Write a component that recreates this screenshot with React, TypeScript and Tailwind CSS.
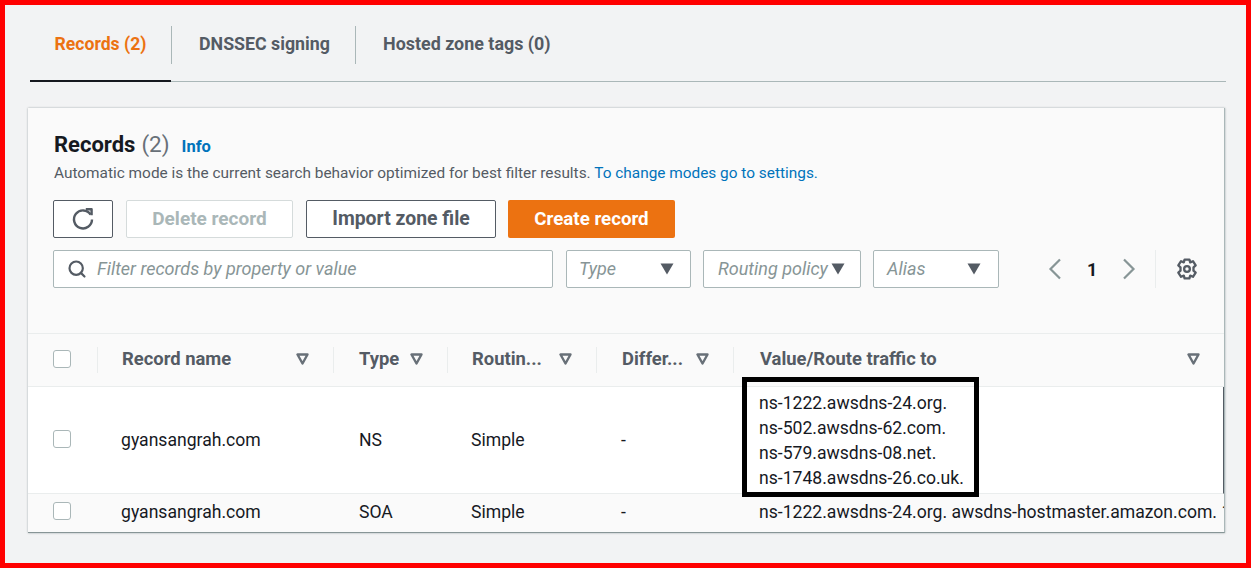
import React from 'react';
import { Search } from 'lucide-react';

const FONT = "font-['Roboto',sans-serif]";
const COLS = 'grid-cols-[69px_236px_114px_149px_137px_1fr]';

const Caret: React.FC = () => (
  <svg width="14" height="12" viewBox="0 0 14 12" className="shrink-0">
    <path d="M0.5 0.5H13.5L7 11.5Z" fill="#545b64" />
  </svg>
);

const SortIcon: React.FC = () => (
  <svg width="13" height="12" viewBox="0 0 13 12" className="shrink-0">
    <path d="M1.5 1.5H11.5L6.5 10.5Z" fill="none" stroke="#687078" strokeWidth="2.4" strokeLinejoin="round" />
  </svg>
);

const RefreshIcon: React.FC = () => (
  <svg width="24" height="24" viewBox="0 0 24 24" fill="none" stroke="#545b64" strokeWidth="2.4">
    <path d="M19.6 7.6A9 9 0 1 0 21 12.5" />
    <path d="M14.8 2.2H20.6V8.2" strokeLinejoin="round" />
  </svg>
);

const GearIcon: React.FC = () => (
  <svg width="22" height="22" viewBox="0 0 20 20" fill="none" stroke="#545b64" strokeWidth="2.1" strokeLinejoin="round">
    <path d="M7.8 1.5H12.2L12.9 4L15.4 2.9L17.9 6.7L15.9 8.5V11.5L17.9 13.3L15.4 17.1L12.9 16L12.2 18.5H7.8L7.1 16L4.6 17.1L2.1 13.3L4.1 11.5V8.5L2.1 6.7L4.6 2.9L7.1 4Z" />
    <circle cx="10" cy="10" r="2.6" />
  </svg>
);

const Chevron: React.FC<{ flip?: boolean }> = ({ flip }) => (
  <svg width="26" height="24" viewBox="0 0 26 24" fill="none" stroke="#879596" strokeWidth="2.2" className={flip ? 'rotate-180' : ''}>
    <path d="M18 2.5L8.5 12L18 21.5" />
  </svg>
);

const Checkbox: React.FC = () => (
  <span className="block w-[18px] h-[18px] rounded-[3px] border border-[#aab7b8] bg-white" />
);

const FilterSelect: React.FC<{ label: string; width: string; pad: string }> = ({ label, width, pad }) => (
  <div className={`${width} ${pad} h-[38px] flex items-center justify-between border border-[#aab7b8] rounded-[2px] bg-white`}>
    <span className="italic text-[18px] text-[#879596] whitespace-nowrap pb-[2px]">{label}</span>
    <Caret />
  </div>
);

const HeaderCell: React.FC<{ label: string; pad: string }> = ({ label, pad }) => (
  <div className={`relative flex items-center justify-between ${pad} pr-[24px] pb-[2px] h-full`}>
    <span className="absolute left-0 top-[13px] bottom-[13px] w-px bg-[#eaeded]" />
    <span className="font-bold text-[18.4px] text-[#545b64] whitespace-nowrap">{label}</span>
    <SortIcon />
  </div>
);

const App: React.FC = () => {
  return (
    <div className={`${FONT} w-[1251px] h-[568px] border-[5px] border-[#ff0000] bg-[#f2f3f4] overflow-hidden`}>
      {/* Tabs */}
      <div className="ml-[25px] mr-[20px] h-[77px] flex items-center border-b border-[#aab7b8] relative">
        <div className="w-[141px] h-[77px] pt-[4px] flex items-center justify-center border-b-2 border-[#16191f] -mb-px">
          <span className="font-bold text-[17.6px] text-[#ec7211]">Records (2)</span>
        </div>
        <div className="w-[185px] h-[38px] mt-[4px] pb-[2px] pl-[2px] flex items-center justify-center border-l border-r border-[#aab7b8]">
          <span className="font-bold text-[17.8px] text-[#545b64]">DNSSEC signing</span>
        </div>
        <div className="pl-[27px] pt-[2px]">
          <span className="font-bold text-[17.9px] text-[#545b64]">Hosted zone tags (0)</span>
        </div>
      </div>

      {/* Records card */}
      <div className="relative ml-[23px] mt-[26px] w-[1197px] h-[425px] bg-[#fafafa] border-r border-b border-r-[#aab7b8] border-b-[#879596] shadow-[0_0_2px_rgba(0,28,36,0.35)]">
        <div className="pl-[25px] pr-[26px] pt-[20px] h-[225px]">
          <div className="flex items-baseline h-[28px] pl-[1px]">
            <h2 className="text-[22px] font-bold text-[#16191f]">Records</h2>
            <span className="text-[22.5px] text-[#687078] ml-[6px]">(2)</span>
            <span className="text-[16.5px] font-bold text-[#0073bb] ml-[12px]">Info</span>
          </div>
          <p className="mt-[7px] pl-[1px] text-[15.4px] leading-[20px] text-[#545b64] whitespace-nowrap">
            Automatic mode is the current search behavior optimized for best filter results.{' '}
            <span className="text-[#0073bb]">To change modes go to settings.</span>
          </p>
          <div className="flex mt-[17px] h-[38px]">
            <button className="w-[60px] flex items-center justify-center border border-[#545b64] rounded-[2px] bg-white">
              <RefreshIcon />
            </button>
            <button className="w-[167px] ml-[13px] border border-[#d5dbdb] rounded-[2px] bg-white font-bold text-[19px] text-[#aab7b8]">Delete record</button>
            <button className="w-[190px] ml-[13px] border border-[#545b64] rounded-[2px] bg-white font-bold text-[19.4px] text-[#545b64]">Import zone file</button>
            <button className="w-[167px] ml-[12px] rounded-[2px] bg-[#ec7211] font-bold text-[18.7px] text-white">Create record</button>
          </div>
          <div className="flex items-center mt-[12px]">
            <div className="w-[500px] h-[38px] flex items-center border border-[#aab7b8] rounded-[2px] bg-white pl-[13px] gap-[10px]">
              <Search size={20} color="#545b64" strokeWidth={2.6} />
              <span className="italic text-[18px] text-[#879596] pb-[2px]">Filter records by property or value</span>
            </div>
            <div className="flex ml-[13px] gap-[12px]">
              <FilterSelect label="Type" width="w-[125px]" pad="pl-[12px] pr-[16px]" />
              <FilterSelect label="Routing policy" width="w-[158px]" pad="pl-[14px] pr-[15px]" />
              <FilterSelect label="Alias" width="w-[126px]" pad="pl-[13px] pr-[17px]" />
            </div>
            <div className="flex items-center ml-[43px] h-[38px]">
              <Chevron />
              <span className="mx-[19px] w-[10px] text-center font-bold text-[18px] text-[#16191f]">1</span>
              <Chevron flip />
              <span className="w-px h-[38px] bg-[#eaeded] ml-[13px] mr-[20px]" />
              <GearIcon />
            </div>
          </div>
        </div>

        {/* Table */}
        <div className={`grid ${COLS} h-[54px] border-t border-b border-[#eaeded] items-center`}>
          <div className="pl-[25px] mb-[3px]"><Checkbox /></div>
          <HeaderCell label="Record name" pad="pl-[25px]" />
          <HeaderCell label="Type" pad="pl-[26px]" />
          <HeaderCell label="Routin..." pad="pl-[25px]" />
          <HeaderCell label="Differ..." pad="pl-[26px]" />
          <HeaderCell label="Value/Route traffic to" pad="pl-[27px]" />
        </div>
        <div className={`grid ${COLS} h-[107px] items-center bg-white border-b border-[#eaeded] border-r border-r-[#545b64] text-[17.6px] text-[#16191f]`}>
          <div className="pl-[25px] mb-[2px]"><Checkbox /></div>
          <div className="pl-[24px]">gyansangrah.com</div>
          <div className="pl-[26px]">NS</div>
          <div className="pl-[24px]">Simple</div>
          <div className="pl-[25px]">-</div>
          <div className="relative pl-[26px] pt-[2px] leading-[25px]">
            <div>ns-1222.awsdns-24.org.</div>
            <div>ns-502.awsdns-62.com.</div>
            <div>ns-579.awsdns-08.net.</div>
            <div>ns-1748.awsdns-26.co.uk.</div>
            {/* annotation box drawn over the cell */}
            <span className="absolute left-[9px] top-[-12px] w-[237px] h-[120px] border-[5px] border-black" />
          </div>
        </div>
        <div className={`grid ${COLS} h-[38px] pb-[1px] items-center text-[17.6px] text-[#16191f]`}>
          <div className="pl-[25px] mb-[3px]"><Checkbox /></div>
          <div className="pl-[24px]">gyansangrah.com</div>
          <div className="pl-[26px]">SOA</div>
          <div className="pl-[24px]">Simple</div>
          <div className="pl-[25px]">-</div>
          <div className="pl-[26px] whitespace-nowrap overflow-hidden">ns-1222.awsdns-24.org. awsdns-hostmaster.amazon.com. 1 7200 900 1209600 86400</div>
        </div>
      </div>
    </div>
  );
};

export default App;
